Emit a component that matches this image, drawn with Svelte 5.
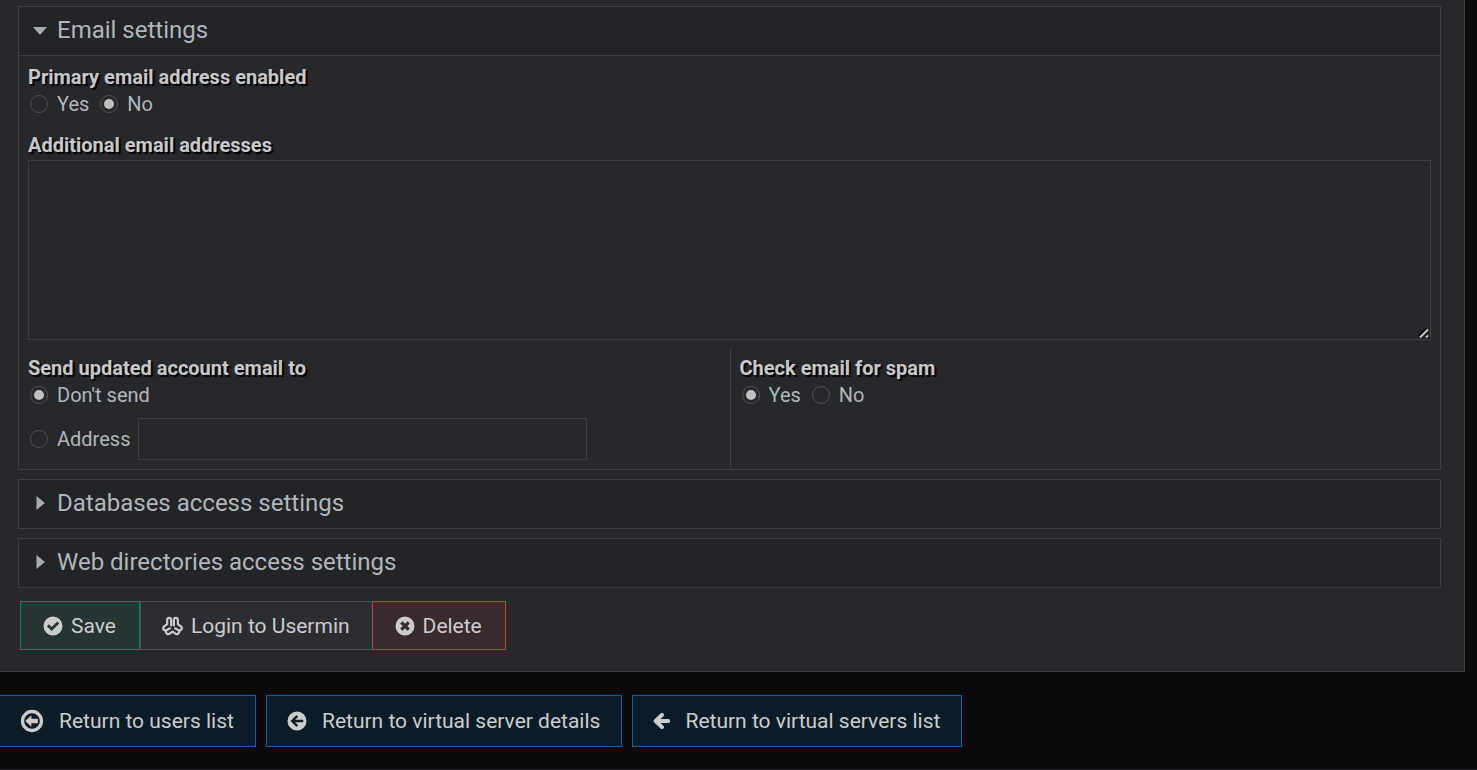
<script lang="ts">
  let primaryEnabled = $state("no");
  let extraAddresses = $state("");
  let sendTo = $state("none");
  let sendAddress = $state("");
  let spamCheck = $state("yes");

  const closedSections = ["Databases access settings", "Web directories access settings"];
</script>

<main class="panel">
  <section class="section">
    <button type="button" class="section-head" aria-expanded="true">
      <svg class="caret" viewBox="0 0 14 14"><path d="M0 4h14L7.6 11.300q-.6.6-1.200 0z" /></svg>
      Email settings
    </button>

    <div class="section-body">
      <fieldset class="field">
        <legend>Primary email address enabled</legend>
        <div class="options">
          <label><input type="radio" value="yes" bind:group={primaryEnabled} />Yes</label>
          <label><input type="radio" value="no" bind:group={primaryEnabled} />No</label>
        </div>
      </fieldset>

      <div class="field">
        <label class="title" for="extra">Additional email addresses</label>
        <div class="area">
          <textarea id="extra" bind:value={extraAddresses}></textarea>
          <svg class="grip" viewBox="0 0 12 12">
            <path class="shade" d="M1.500 10 9.500 2M8 10.500l2-2" />
            <path d="M2 10.500 10 2.500M8 10.500l2-2" />
          </svg>
        </div>
      </div>

      <div class="columns">
        <fieldset class="field">
          <legend>Send updated account email to</legend>
          <div class="options">
            <label><input type="radio" value="none" bind:group={sendTo} />Don't send</label>
          </div>
          <div class="options address">
            <label><input type="radio" value="address" bind:group={sendTo} />Address</label>
            <input type="text" aria-label="Address" bind:value={sendAddress} />
          </div>
        </fieldset>

        <fieldset class="field">
          <legend>Check email for spam</legend>
          <div class="options">
            <label><input type="radio" value="yes" bind:group={spamCheck} />Yes</label>
            <label><input type="radio" value="no" bind:group={spamCheck} />No</label>
          </div>
        </fieldset>
      </div>
    </div>
  </section>

  {#each closedSections as title}
    <section class="section">
      <button type="button" class="section-head" aria-expanded="false">
        <svg class="caret" viewBox="0 0 14 14"><path d="M3.500 0v14l7.800-6.400q.6-.6 0-1.200z" /></svg>
        {title}
      </button>
    </section>
  {/each}

  <div class="actions">
    <button type="button" class="btn save">
      <svg class="icon" viewBox="0 0 20 20">
        <path
          fill-rule="evenodd"
          d="M10 .5a9.5 9.5 0 1 0 0 19 9.5 9.5 0 0 0 0-19zM8.7 15.1 3.9 10.3l2-2 2.8 2.8 5.5-5.5 2 2z"
        />
      </svg>
      Save
    </button>
    <button type="button" class="btn login">
      <svg class="icon" viewBox="0 0 22 20">
        <g fill="none" stroke="currentColor" stroke-width="2.300" stroke-linecap="round" stroke-linejoin="round">
          <path d="M9.600 9.500V3.500q-.1-2-2.100-2t-2.100 2V8L2.200 10.400Q.6 12 1.700 13.800q1.200 1.500 3.300.5L8.200 12.400" />
          <path d="M12.400 9.500V3.500q.1-2 2.100-2t2.100 2V8l3.200 2.400q1.600 1.600.5 3.400-1.200 1.500-3.300.5l-3.200-1.900" />
          <path d="M4.200 14.800q-.6 2.300 1 3.300 1.400.8 2.800-.2l3-2.100 3 2.100q1.400 1 2.800.2 1.600-1 1-3.300" />
        </g>
      </svg>
      Login to Usermin
    </button>
    <button type="button" class="btn delete">
      <svg class="icon" viewBox="0 0 20 20">
        <path
          fill-rule="evenodd"
          d="M10 .5a9.5 9.5 0 1 0 0 19 9.5 9.5 0 0 0 0-19zM7.5 5.2 10 7.7l2.5-2.5 2.3 2.3-2.5 2.5 2.5 2.5-2.3 2.3-2.5-2.5-2.5 2.5-2.3-2.3L7.7 10 5.2 7.5z"
        />
      </svg>
      Delete
    </button>
  </div>
</main>

<nav class="returns">
  <a href="#users">
    <svg class="icon large" viewBox="0 0 22 22">
      <circle cx="11" cy="11" r="8.7" fill="none" stroke="currentColor" stroke-width="3" />
      <path d="M4.8 11 10.4 5.8v3.200h6v4h-6v3.200z" />
    </svg>
    Return to users list
  </a>
  <a href="#server">
    <svg class="icon" viewBox="0 0 20 20">
      <path
        fill-rule="evenodd"
        d="M10 .5a9.5 9.5 0 1 0 0 19 9.5 9.5 0 0 0 0-19zM3.5 10l6-6 1.700 1.700-3.100 3.100h8.100v2.400H8.100l3.100 3.100-1.700 1.700z"
      />
    </svg>
    Return to virtual server details
  </a>
  <a href="#servers">
    <svg class="icon arrow" viewBox="0 0 18 18">
      <path
        d="M9.500 2.500 2.800 9l6.700 6.500M3.500 9h12.500"
        fill="none"
        stroke="currentColor"
        stroke-width="4.200"
        stroke-linejoin="round"
        stroke-linecap="round"
      />
    </svg>
    Return to virtual servers list
  </a>
</nav>

<style>
  :global(body) {
    background: #0a0a0a;
    color: #b0b6ba;
    font: 20px/24px Roboto, "Liberation Sans", sans-serif;
  }
  :global(#app) {
    border-bottom: 1px solid #202124;
  }
  button,
  input,
  textarea {
    font: inherit;
    color: inherit;
  }
  .panel {
    background: #27282c;
    border: solid #3e3f43;
    border-width: 0 1px 1px 0;
    margin-right: 12px;
    padding: 6px 23px 21px 18px;
  }
  .section {
    border: 1px solid #3e3f43;
    margin-bottom: 9px;
  }
  .section-head {
    display: flex;
    align-items: center;
    gap: 10px;
    width: 100%;
    height: 48px;
    padding: 0 14px 2px;
    border: 0;
    background: #232427;
    font-size: 24px;
    text-align: left;
    cursor: pointer;
  }
  .caret {
    width: 14px;
    height: 14px;
    fill: #a8abae;
  }
  .section-body {
    border-top: 1px solid #3e3f43;
    padding: 9px 9px 0;
  }
  .field {
    min-width: 0;
    margin: 0;
    padding: 0;
    border: 0;
  }
  legend,
  .title {
    display: block;
    padding: 0;
    color: #c8c8c8;
    font-weight: 700;
    text-shadow: 2px 2px 1px #000;
  }
  /* floated so that the fieldset's border starts above the legend */
  legend {
    float: left;
    width: 100%;
  }
  .options {
    display: flex;
    clear: both;
    align-items: center;
    gap: 9px;
    padding: 3px 0 17px;
  }
  .options label {
    display: flex;
    align-items: center;
    gap: 9px;
  }
  input[type="radio"] {
    appearance: none;
    display: grid;
    place-items: center;
    box-sizing: border-box;
    width: 18px;
    height: 18px;
    margin: 0 0 0 2px;
    border: 1px solid #505155;
    border-radius: 50%;
  }
  input[type="radio"]:checked::before {
    content: "";
    width: 10px;
    height: 10px;
    border-radius: 50%;
    background: #bfbfbf;
  }
  input[type="text"],
  textarea {
    box-sizing: border-box;
    border: 1px solid #3e3f43;
    border-radius: 0;
    background: transparent;
    outline: 0;
  }
  .area {
    position: relative;
    margin-top: 3px;
  }
  textarea {
    display: block;
    width: 100%;
    height: 180px;
    padding: 8px;
    resize: vertical;
  }
  textarea::-webkit-resizer {
    background: transparent;
  }
  .grip {
    position: absolute;
    right: 1px;
    bottom: 1px;
    width: 12px;
    height: 12px;
    fill: none;
    stroke: #c4c4c4;
    stroke-width: 2;
    pointer-events: none;
  }
  .grip .shade {
    stroke: #101010;
    stroke-width: 5;
  }
  .columns {
    display: grid;
    grid-template-columns: 1fr 1fr;
    margin: 8px 0 1px;
  }
  .columns legend {
    padding-top: 8px;
  }
  .columns .field + .field {
    border-left: 1px solid #3e3f43;
    padding-left: 9px;
  }
  .columns .options {
    padding-bottom: 11px;
  }
  .columns .address {
    gap: 8px;
    padding: 0 0 8px;
  }
  input[type="text"] {
    width: 64%;
    height: 42px;
    padding: 0 10px;
  }
  .actions {
    display: flex;
    margin: 13px 2px 0;
  }
  .btn,
  .returns a {
    display: flex;
    align-items: center;
    border: 1px solid;
    color: #ccc;
    font-size: 21px;
    text-decoration: none;
    white-space: nowrap;
    cursor: pointer;
  }
  .btn {
    gap: 8px;
    height: 49px;
    padding: 0 23px 0 22px;
  }
  .icon {
    width: 20px;
    height: 20px;
    flex: none;
    fill: currentColor;
  }
  .login.btn {
    padding: 0 22px 0 21px;
  }
  .login .icon {
    width: 21px;
  }
  .save {
    background: #263433;
    border-color: #16825d;
  }
  .login {
    background: #2c2d32;
    border-color: #4b4c50;
    border-right: 0;
  }
  .delete {
    background: #372b2d;
    border-color: #bf4332;
  }
  .returns {
    display: flex;
    gap: 10px;
    padding: 23px 0 22px;
  }
  .returns a {
    gap: 15px;
    height: 50px;
    padding: 0 21px 0 20px;
    background: #0a1c28;
    border-color: #0b5fa5;
  }
  .returns a:first-child {
    border-left: 0;
  }
  .icon.large {
    width: 24px;
    height: 24px;
  }
  .icon.arrow {
    width: 17px;
    height: 18px;
  }
</style>
